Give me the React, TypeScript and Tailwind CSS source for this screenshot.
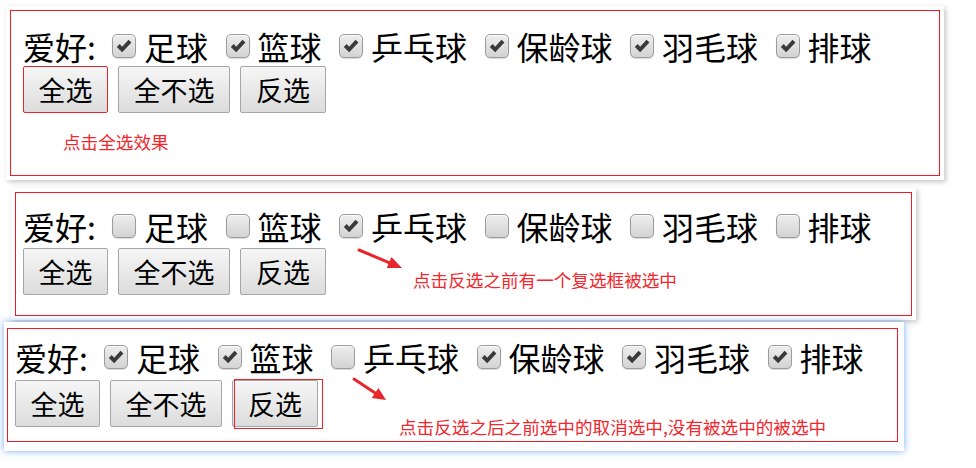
import React from "react";

const FONT = "font-['Noto_Sans_CJK_SC','Microsoft_YaHei',sans-serif]";

function Box({ checked }: { checked: boolean }) {
  return (
    <div className="w-[24px] h-[24px] shrink-0 rounded-[5px] border-[1.5px] border-[#9c9c9c] bg-linear-to-b from-[#eeeeee] to-[#d3d3d3] flex items-center justify-center shadow-[inset_0_1px_0_#fafafa,0_1px_1px_rgba(0,0,0,0.15)]">
      {checked && (
        <svg width="18" height="18" viewBox="0 0 16 16">
          <path d="M1.6 8.8 L4.2 6.3 L6.4 8.6 L12 2.4 L14.6 4.9 L6.4 13.6 Z" fill="#3a3a3a" />
        </svg>
      )}
    </div>
  );
}

const ITEMS = ["足球", "篮球", "乒乓球", "保龄球", "羽毛球", "排球"];

function Row({ checks }: { checks: boolean[] }) {
  return (
    <div className="flex items-center h-[36px] text-[32px] leading-[36px] text-black">
      <span className="inline-block w-[89px] whitespace-nowrap">爱好:</span>
      {ITEMS.map((t, i) => (
        <div key={t} className={`flex items-center ${i === 0 ? "" : "ml-[17.5px]"}`}>
          <Box checked={checks[i]} />
          <span className="ml-[8px] whitespace-nowrap">{t}</span>
        </div>
      ))}
    </div>
  );
}

function Btn({ label, w, focus }: { label: string; w: string; focus?: boolean }) {
  return (
    <button
      className={`${w} h-[47px] shrink-0 rounded-[2px] border ${
        focus ? "border-[#e3262d]" : "border-[#a6a6a6]"
      } bg-linear-to-b from-[#f6f6f6] to-[#dcdcdc] text-[27px] leading-[30px] text-black flex items-center justify-center`}
    >
      {label}
    </button>
  );
}

function Arrow({ w, h, x1, y1, tip, a, b, bx, by }: { w: number; h: number; x1: number; y1: number; tip: [number, number]; a: [number, number]; b: [number, number]; bx: number; by: number }) {
  return (
    <svg width={w} height={h} viewBox={`0 0 ${w} ${h}`}>
      <line x1={x1} y1={y1} x2={bx} y2={by} stroke="#e8262c" strokeWidth="3" strokeLinecap="round" />
      <polygon points={`${tip[0]},${tip[1]} ${a[0]},${a[1]} ${b[0]},${b[1]}`} fill="#e8262c" />
    </svg>
  );
}

export default function App() {
  return (
    <div className={`w-[976px] h-[468px] bg-white overflow-hidden ${FONT}`}>
      {/* Panel 1 */}
      <div className="mt-[6px] ml-[6px] w-[938px] p-[4px] bg-white shadow-[2px_2px_5px_rgba(0,0,0,0.22)]">
        <div className="h-[166px] border border-[#ee1c25] pl-[12px] pt-[17px]">
          <Row checks={[true, true, true, true, true, true]} />
          <div className="flex gap-[10px] mt-[2px]">
            <Btn label="全选" w="w-[85px]" focus />
            <Btn label="全不选" w="w-[112px]" />
            <Btn label="反选" w="w-[86px]" />
          </div>
          <div className="ml-[40px] mt-[19px] text-[17.6px] leading-[20px] text-[#f0282e]">点击全选效果</div>
        </div>
      </div>

      {/* Panel 2 */}
      <div className="mt-[8px] ml-[11px] w-[905px] p-[4px] bg-white shadow-[2px_2px_5px_rgba(0,0,0,0.22)]">
        <div className="relative h-[124px] border border-[#ee1c25] pl-[7px] pt-[15px]">
          <Row checks={[false, false, true, false, false, false]} />
          <div className="flex items-end gap-[10px] mt-[4px]">
            <Btn label="全选" w="w-[85px]" />
            <Btn label="全不选" w="w-[112px]" />
            <Btn label="反选" w="w-[86px]" />
            <div className="ml-[77px] mb-[5px] text-[17.6px] leading-[20px] text-[#f0282e] whitespace-nowrap">
              点击反选之前有一个复选框被选中
            </div>
          </div>
          <div className="absolute left-[340px] top-[53px]">
            <Arrow w={52} h={28} x1={3} y1={4} bx={33} by={16.6} tip={[46, 22]} a={[30.8, 22.1]} b={[35.4, 11.1]} />
          </div>
        </div>
      </div>

      {/* Panel 3 */}
      <div className="mt-[2px] ml-[4px] w-[900px] pl-[3px] pt-[6px] pr-[6px] pb-[9px] bg-white shadow-[0_0_7px_rgba(60,135,230,0.7)]">
        <div className="relative h-[114px] border border-[#ee1c25] pl-[7px] pt-[10px]">
          <Row checks={[true, true, false, true, true, true]} />
          <div className="flex items-end gap-[10px] mt-[5px]">
            <Btn label="全选" w="w-[85px]" />
            <Btn label="全不选" w="w-[112px]" />
            <div className="relative">
              <Btn label="反选" w="w-[86px]" />
              <div className="absolute left-[2px] top-[-1px] w-[89px] h-[50px] border border-[#e8262c]" />
            </div>
            <div className="ml-[71px] mb-[-10px] text-[17.6px] leading-[20px] text-[#f0282e] whitespace-nowrap">
              点击反选之后之前选中的取消选中,没有被选中的被选中
            </div>
          </div>
          <div className="absolute left-[343px] top-[46px]">
            <Arrow w={40} h={30} x1={3} y1={4} bx={24.1} by={17.9} tip={[35, 25]} a={[20.8, 22.9]} b={[27.4, 12.9]} />
          </div>
        </div>
      </div>
    </div>
  );
}
